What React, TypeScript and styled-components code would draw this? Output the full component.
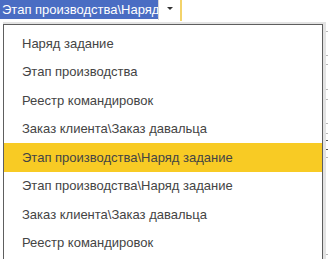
import React from "react";
import styled, { createGlobalStyle } from "styled-components";

const Global = createGlobalStyle`
  html, body { margin: 0; padding: 0; background: #ffffff; }
  body { font-family: "Liberation Sans", Arial, sans-serif; }
`;

const Page = styled.div`
  position: relative;
  width: 328px;
  height: 259px;
  overflow: hidden;
  background: #ffffff;
`;

const FieldRow = styled.div`
  display: flex;
  align-items: stretch;
  height: 21px;
`;

const SelectedValue = styled.div`
  width: 156px;
  padding-left: 2px;
  background: #4a6dc3;
  color: #ffffff;
  font-size: 13px;
  line-height: 20px;
  white-space: nowrap;
  overflow: hidden;
  height: 19px;
`;

const ArrowButton = styled.div`
  width: 22px;
  height: 20px;
  border-left: 1px solid #d6d6d6;
  display: flex;
  justify-content: center;
  padding-top: 7px;
  box-sizing: border-box;
`;

const Arrow = styled.div`
  width: 0;
  height: 0;
  border-left: 3px solid transparent;
  border-right: 3px solid transparent;
  border-top: 3px solid #333333;
`;

const FocusMark = styled.div`
  width: 2px;
  height: 21px;
  background: #f3d36a;
`;

const BackdropEdge = styled.div`
  position: absolute;
  right: 0;
  top: 24px;
  width: 4px;
  height: 235px;
`;

const Tick = styled.div<{ $dark?: boolean }>`
  position: absolute;
  left: 1px;
  width: 3px;
  height: 1px;
  background: ${(p) => (p.$dark ? "#555555" : "#b8b8b8")};
`;

const Popup = styled.div`
  position: absolute;
  left: 3px;
  top: 24px;
  width: 318px;
  height: 232px;
  border: 1px solid #5e5e5e;
  background: #ffffff;
  box-shadow: 3px 0 0 #e3e3e3, 0 -2px 0 #e3e3e3, 3px -2px 0 #e3e3e3;
  padding: 4px 0 4px;
  box-sizing: content-box;
  display: flex;
  flex-direction: column;
`;

const Item = styled.div<{ $active?: boolean }>`
  height: 28.5px;
  flex: 0 0 28.5px;
  display: flex;
  align-items: center;
  padding-left: 18px;
  font-size: 13px;
  color: #444444;
  white-space: nowrap;
  background: ${(p) => (p.$active ? "#f8cb24" : "transparent")};
`;

const items = [
  "Наряд задание",
  "Этап производства",
  "Реестр командировок",
  "Заказ клиента\\Заказ давальца",
  "Этап производства\\Наряд задание",
  "Этап производства\\Наряд задание",
  "Заказ клиента\\Заказ давальца",
  "Реестр командировок",
];

const ticks: { y: number; dark?: boolean }[] = [
  { y: 7 },
  { y: 31 },
  { y: 40 },
  { y: 65 },
  { y: 75 },
  { y: 99 },
  { y: 109 },
  { y: 116, dark: true },
  { y: 125, dark: true },
  { y: 133 },
  { y: 230 },
];

export default function App() {
  return (
    <>
      <Global />
      <Page>
        <FieldRow>
          <SelectedValue>Этап производства\Наряд</SelectedValue>
          <ArrowButton>
            <Arrow />
          </ArrowButton>
          <FocusMark />
        </FieldRow>
        <BackdropEdge>
          {ticks.map((t, i) => (
            <Tick key={i} $dark={t.dark} style={{ top: t.y }} />
          ))}
        </BackdropEdge>
        <Popup>
          {items.map((t, i) => (
            <Item key={i} $active={i === 4}>
              {t}
            </Item>
          ))}
        </Popup>
      </Page>
    </>
  );
}
